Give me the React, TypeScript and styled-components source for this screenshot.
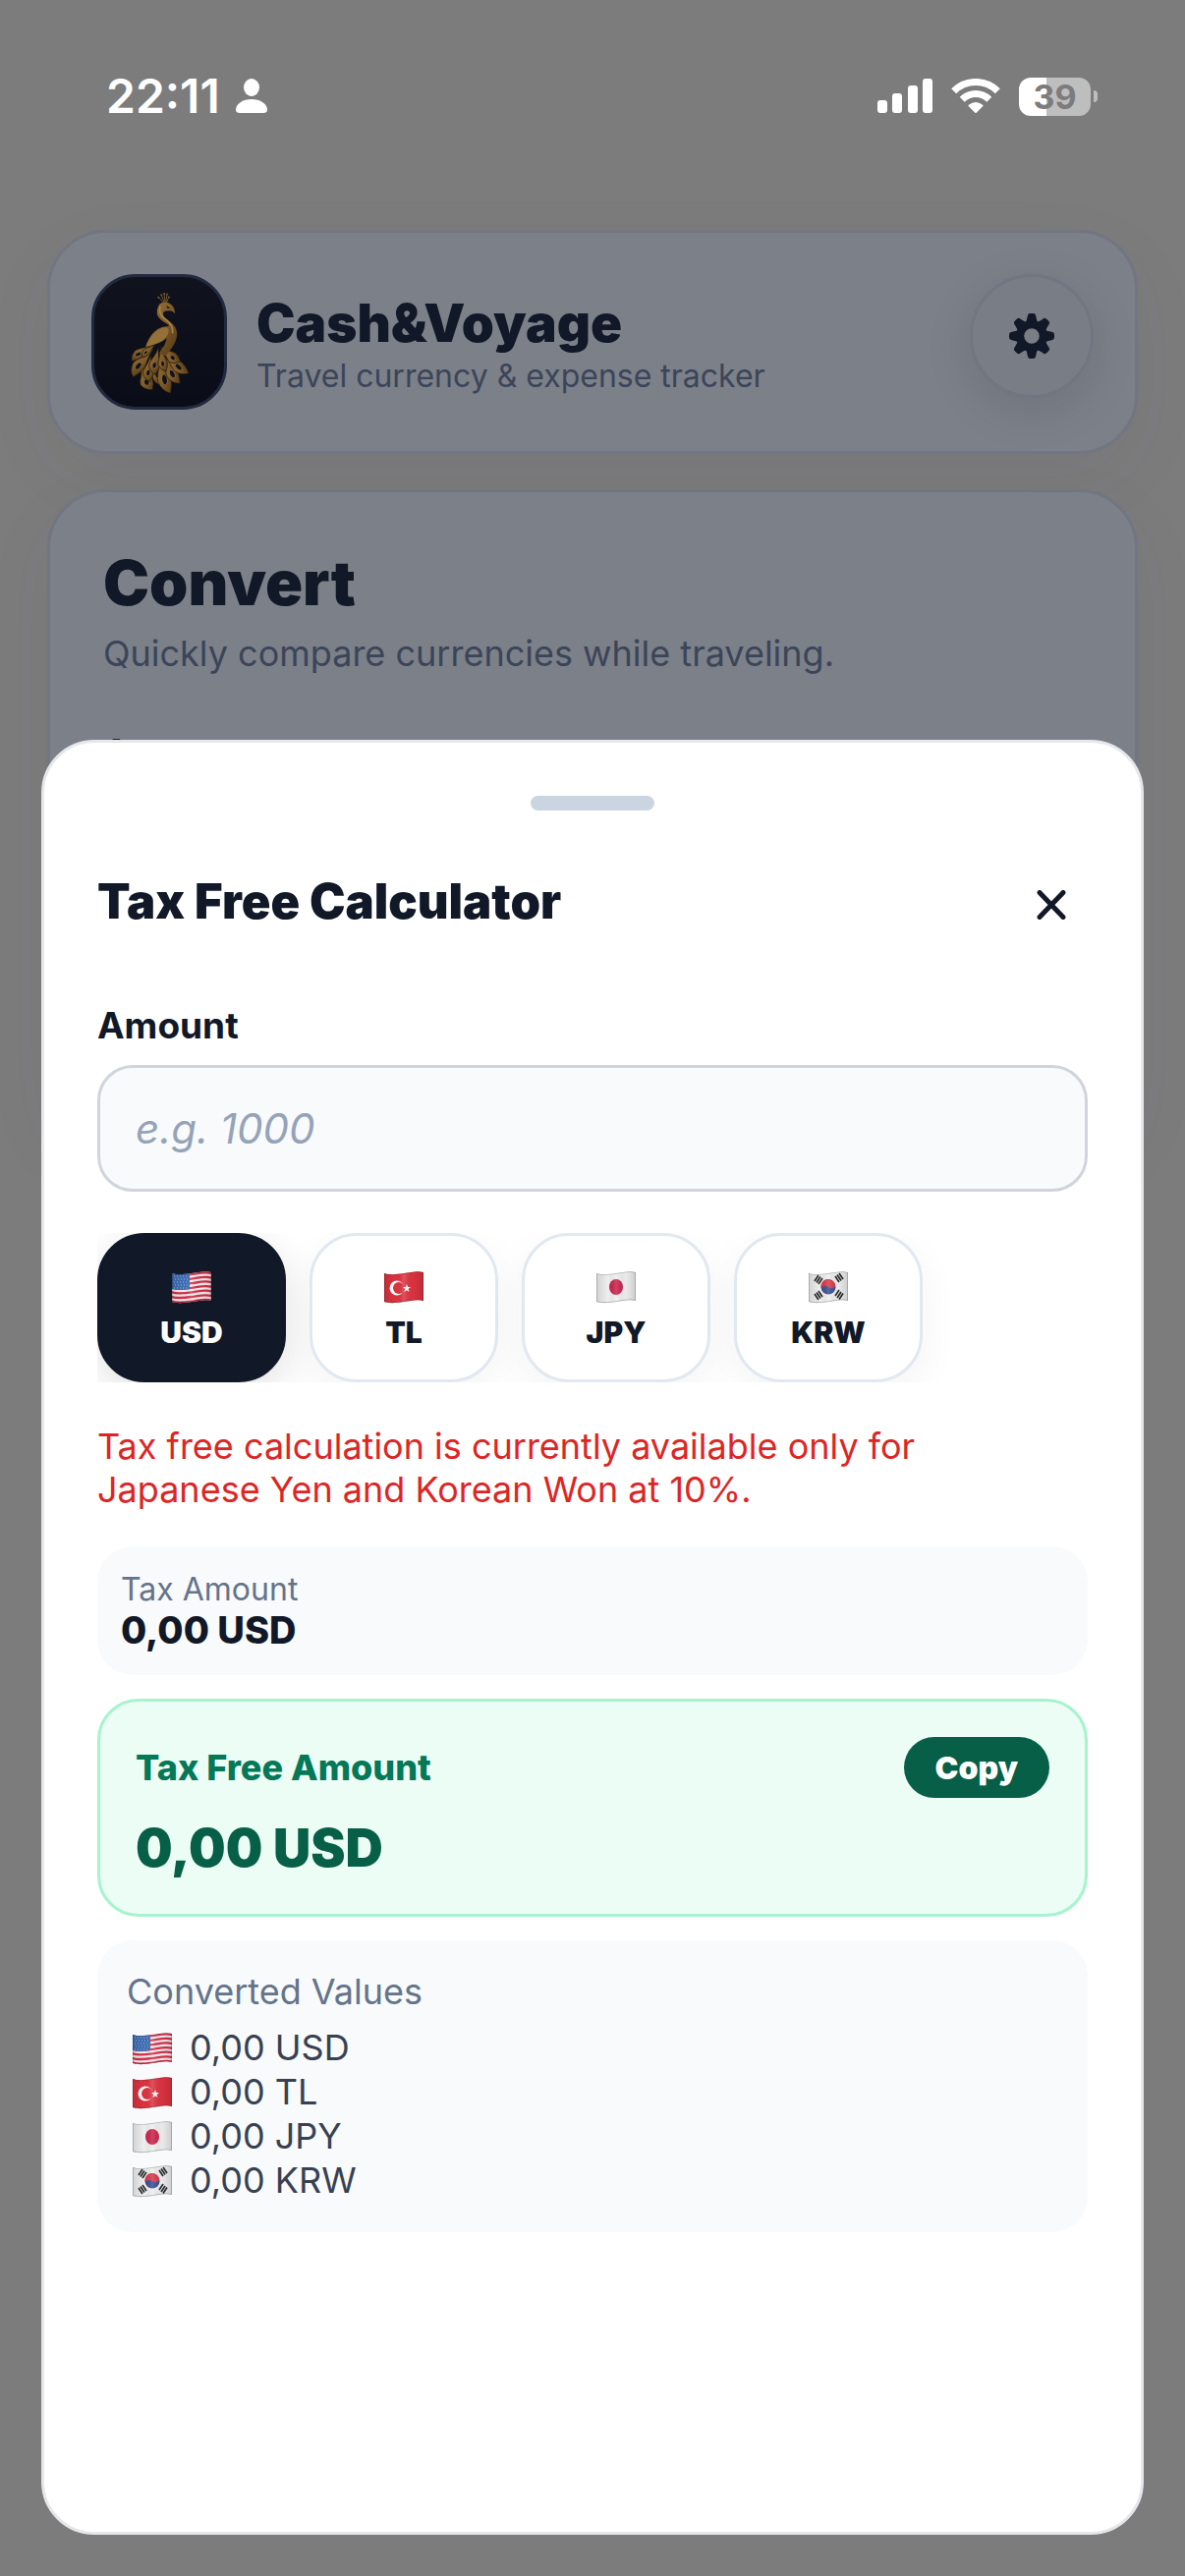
import { ReactNode, useId, useState } from "react";
import styled, { createGlobalStyle } from "styled-components"

type Currency = "USD" | "TL" | "JPY" | "KRW"

const currencies: Currency[] = ["USD", "TL", "JPY", "KRW"]

const currencyNames = {
    USD: "US Dollar",
    TL: "Turkish Lira",
    JPY: "Japanese Yen",
    KRW: "Korean Won"
}

function formatMoney(value: number){
    return value.toFixed(2).replace(".", ",")
}

function App(){

    const [amount, setAmount] = useState("")
    const [currency, setCurrency] = useState<Currency>("USD")

    const taxFreeAvailable = currency === "JPY" || currency === "KRW"
    const typed = Number(amount.replace(",", ".")) || 0
    const tax = taxFreeAvailable ? typed * 0.1 : 0
    const total = taxFreeAvailable ? typed - tax : 0

    return(
        <>
        <GlobalStyle/>
        <Screen>
            <StatusBar>
                <Clock>
                    22:11
                    <PersonIcon/>
                </Clock>
                <Indicators>
                    <SignalIcon/>
                    <WifiIcon/>
                    <Battery>
                        <span>39</span>
                        <BatteryTip/>
                    </Battery>
                </Indicators>
            </StatusBar>

            <HeaderCard>
                <Logo><Peacock/></Logo>
                <Brand>
                    <h1>Cash&amp;Voyage</h1>
                    <p>Travel currency &amp; expense tracker</p>
                </Brand>
                <SettingsButton aria-label="Settings"><GearIcon/></SettingsButton>
            </HeaderCard>

            <ConvertCard>
                <h2>Convert</h2>
                <p>Quickly compare currencies while traveling.</p>
                <strong>Amount</strong>
            </ConvertCard>
        </Screen>

        <Overlay>
            <Sheet role="dialog" aria-labelledby="sheet-title">
                <Handle/>
                <SheetHeader>
                    <h2 id="sheet-title">Tax Free Calculator</h2>
                    <CloseButton aria-label="Close"><CloseIcon/></CloseButton>
                </SheetHeader>

                <Label htmlFor="amount">Amount</Label>
                <AmountInput
                    id="amount"
                    value={amount}
                    onChange={(e) => setAmount(e.target.value)}
                    type="text"
                    inputMode="decimal"
                    placeholder="e.g. 1000"
                />

                <Chips>
                    {currencies.map((code) =>
                        <Chip
                            key={code}
                            type="button"
                            $active={code === currency}
                            aria-pressed={code === currency}
                            onClick={() => setCurrency(code)}
                        >
                            <Flag code={code}/>
                            {code}
                        </Chip>
                    )}
                </Chips>

                {!taxFreeAvailable &&
                    <Warning>Tax free calculation is currently available only for Japanese Yen and Korean Won at 10%.</Warning>
                }

                <TaxBox>
                    <p>Tax Amount</p>
                    <strong>{formatMoney(tax)} {currency}</strong>
                </TaxBox>

                <TotalBox>
                    <TotalHeader>
                        <h3>Tax Free Amount</h3>
                        <CopyButton type="button" onClick={() => navigator.clipboard?.writeText(formatMoney(total))}>Copy</CopyButton>
                    </TotalHeader>
                    <strong>{formatMoney(total)} {currency}</strong>
                </TotalBox>

                <ConvertedBox>
                    <h3>Converted Values</h3>
                    <ul>
                        {currencies.map((code) =>
                            <li key={code}>
                                <Flag code={code}/>
                                {formatMoney(0)} {code}
                            </li>
                        )}
                    </ul>
                </ConvertedBox>
            </Sheet>
        </Overlay>
        </>
    )
}

export default App

function PersonIcon(){
    return(
        <svg width="32" height="36" viewBox="0 0 32 36" fill="#fff" aria-hidden="true">
            <ellipse cx="16" cy="9" rx="8" ry="9"/>
            <path d="M16 21C25 21 32 26 32 31.500Q32 35 28 35H4Q0 35 0 31.500C0 26 7 21 16 21Z"/>
        </svg>
    )
}

function SignalIcon(){
    return(
        <svg width="56" height="36" viewBox="0 0 56 36" fill="#fff" aria-hidden="true">
            <rect x="0" y="22" width="10" height="13" rx="3"/>
            <rect x="15" y="15" width="10" height="20" rx="3"/>
            <rect x="31" y="7" width="10" height="28" rx="3"/>
            <rect x="46" y="0" width="10" height="35" rx="3"/>
        </svg>
    )
}

function WifiIcon(){
    return(
        <svg width="50" height="36" viewBox="0 0 50 36" fill="none" stroke="#fff" strokeWidth="7" aria-hidden="true">
            <path d="M2.700 12.700A31.500 31.500 0 0 1 47.300 12.700"/>
            <path d="M11.200 21.200A19.500 19.500 0 0 1 38.800 21.200"/>
            <path d="M25 34L18.500 27.500Q25 22.500 31.500 27.500Z" fill="#fff" stroke="#fff" strokeWidth="2" strokeLinejoin="round"/>
        </svg>
    )
}

function GearIcon(){
    return(
        <svg width="46" height="46" viewBox="-23 -23 46 46" aria-hidden="true">
            {[0, 45, 90, 135, 180, 225, 270, 315].map((angle) =>
                <path
                    key={angle}
                    transform={`rotate(${angle})`}
                    d="M-7 -13Q-5 -15 -4.500 -19L-4 -21Q-3.600 -22.800 -2 -22.900Q0 -23.100 2 -22.900Q3.600 -22.800 4 -21L4.500 -19Q5 -15 7 -13Z"
                    fill="#111827"
                />
            )}
            <circle r="11.800" fill="none" stroke="#111827" strokeWidth="8"/>
        </svg>
    )
}

function CloseIcon(){
    return(
        <svg width="30" height="30" viewBox="0 0 30 30" stroke="#111827" strokeWidth="5" strokeLinecap="round" aria-hidden="true">
            <path d="M3 2.500L27 27.500M27 2.500L3 27.500"/>
        </svg>
    )
}

// x, y of the root, angle, length, width
const feathers = [
    [205, 240, 3, 105, 36],
    [208, 235, -10, 140, 44],
    [150, 280, -17, 87, 42],
    [215, 240, -26, 115, 38],
    [215, 235, -46, 112, 36],
    [190, 225, 40, 115, 38],
    [180, 250, 8, 84, 34],
    [212, 222, -47, 78, 34],
    [190, 215, 58, 88, 30],
    [205, 225, 13, 87, 34],
    [212, 225, -7, 78, 30],
    [195, 215, 50, 60, 22]
]

function Peacock(){
    return(
        <svg viewBox="0 0 414 414" aria-hidden="true">
            <defs>
                <linearGradient id="gold" x1="0" y1="0" x2="1" y2="1">
                    <stop offset="0" stopColor="#9a7338"/>
                    <stop offset="0.500" stopColor="#7f5b29"/>
                    <stop offset="1" stopColor="#523716"/>
                </linearGradient>
            </defs>
            <g stroke="#755a30" strokeWidth="3" fill="#755a30">
                <path d="M222 82L206 66M224 80L214 58M226 80L223 54M228 80L232 56M230 82L238 64" fill="none"/>
                <circle cx="205" cy="65" r="2"/>
                <circle cx="214" cy="57" r="2"/>
                <circle cx="223" cy="53" r="2"/>
                <circle cx="232" cy="55" r="2"/>
                <circle cx="238" cy="64" r="2"/>
            </g>
            {feathers.map(([x, y, angle, length, width], i) =>
                <g key={i} transform={`translate(${x} ${y}) rotate(${angle})`}>
                    <path
                        d={`M0 0C${-width / 6} ${length * 0.4} ${-width / 2} ${length * 0.5} ${-width / 2} ${length * 0.7}Q${-width / 3} ${length * 0.92} ${width / 4} ${length}Q${width / 2} ${length * 0.8} ${width / 2} ${length * 0.66}C${width / 2} ${length * 0.5} ${width / 6} ${length * 0.4} 0 0Z`}
                        fill="url(#gold)"
                        stroke="#1f1710"
                        strokeWidth="2"
                    />
                    <ellipse cy={length * 0.67} rx={width / 5} ry={length * 0.12} fill="#11121a" stroke="#a27c42" strokeWidth="2"/>
                </g>
            )}
            <path d="M204 94C208 80 226 76 238 83C250 89 256 98 258 117C250 108 244 106 234 108C220 108 217 114 221 123C228 140 264 148 264 180C264 210 242 234 226 252L208 242C222 222 232 206 230 194C224 206 196 216 164 222C172 200 188 162 226 158C238 157 240 156 236 152C216 140 200 130 200 112Q200 102 204 94Z" fill="url(#gold)"/>
            <path d="M234 184C222 206 196 214 164 222C176 194 194 168 226 161C238 162 240 172 234 184Z" fill="#94703a"/>
            <path d="M210 94C206 110 211 124 226 134C244 146 252 158 250 180" fill="none" stroke="#a8834a" strokeWidth="5"/>
            <path d="M230 92L242 98L234 101Z" fill="#1a1518"/>
        </svg>
    )
}

const wave = "C12 8 19 7 26 6S40 3 46 5"

function Flag({ code }: { code: Currency }){

    const id = useId()
    const art: Record<Currency, ReactNode> = {
        USD:
            <>
                <rect x="6" y="2" width="40" height="36" fill="#f3eeee"/>
                <g fill="none" stroke="#d5304a" strokeWidth="2.300">
                    {[0, 1, 2, 3, 4, 5, 6].map((i) =>
                        <path key={i} transform={`translate(0 ${i * 4.6 + 1})`} d={`M6 6${wave}`}/>
                    )}
                </g>
                <path d="M6 4L24 5V22Q14 24 6 22Z" fill="#3f6fb5"/>
                <g stroke="#9fbbe0" strokeWidth="1" strokeDasharray="1 2">
                    <path d="M8 9H23M9 12H23M8 15H23M9 18H23M8 21H23"/>
                </g>
            </>,
        TL:
            <>
                <rect x="6" y="2" width="40" height="36" fill="#dc3340"/>
                <circle cx="19" cy="21" r="7.500" fill="#fff"/>
                <circle cx="21" cy="21" r="6" fill="#dc3340"/>
                <path d="M25 20L28 20L29 17L30 20L33 20L30.500 22L31.500 25L29 23.300L26.500 25L27.300 22Z" fill="#fff"/>
            </>,
        JPY:
            <>
                <rect x="6" y="2" width="40" height="36" fill="#efefef"/>
                <ellipse cx="26" cy="20" rx="7" ry="8" fill="#c9234a"/>
            </>,
        KRW:
            <>
                <rect x="6" y="2" width="40" height="36" fill="#efefef"/>
                <circle cx="26" cy="20" r="7.500" fill="#3b4f8f"/>
                <path d="M18.500 21A7.500 7.500 0 0 1 33.400 18C32 22 28 22 26 20S20 19 18.500 21Z" fill="#d63a4a"/>
                <g stroke="#2b2b2b" strokeWidth="1.700">
                    <path d="M12 14L16 8M14 15.500L18 9.500M16 17L20 11"/>
                    <path d="M33 9L37 15M35 7.500L39 13.500M37 6L41 12"/>
                    <path d="M12 27L16 33M14 25.500L18 31.500M16 24L20 30"/>
                    <path d="M33 29L37 23M35 31L39 25M37 32.500L41 26.500"/>
                </g>
            </>
    }

    return(
        <svg width="52" height="40" viewBox="0 0 52 40" role="img" aria-label={currencyNames[code]}>
            <defs>
                <clipPath id={`${id}-clip`}>
                    <path d={`M6 6${wave}V34C40 32 33 34 26 35S12 37 6 35Z`}/>
                </clipPath>
                <linearGradient id={`${id}-shade`}>
                    <stop offset="0" stopColor="#000" stopOpacity="0.120"/>
                    <stop offset="0.300" stopColor="#000" stopOpacity="0"/>
                    <stop offset="0.500" stopColor="#fff" stopOpacity="0.150"/>
                    <stop offset="0.750" stopColor="#000" stopOpacity="0.020"/>
                    <stop offset="1" stopColor="#000" stopOpacity="0.140"/>
                </linearGradient>
            </defs>
            <g clipPath={`url(#${id}-clip)`}>
                {art[code]}
                <rect x="6" y="2" width="40" height="36" fill={`url(#${id}-shade)`}/>
                <path d={`M6 6${wave}V34C40 32 33 34 26 35S12 37 6 35Z`} fill="none" stroke="#000" strokeOpacity="0.250" strokeWidth="1.500"/>
            </g>
        </svg>
    )
}

const GlobalStyle = createGlobalStyle`
    * {
        box-sizing: border-box;
        margin: 0;
        padding: 0;
    }

    body {
        background-color: #7c7c7d;
        color: #111827;
        font-family: Inter, "Liberation Sans", sans-serif;
    }

    button, input {
        font-family: inherit;
    }

    svg {
        display: block;
        flex-shrink: 0;
    }
`

const Screen = styled.main`
    height: 100vh;
    padding: 0 48px;
    overflow: hidden;
`

const StatusBar = styled.div`
    height: 234px;
    padding: 66px 41px 0 60px;
    display: flex;
    align-items: flex-start;
    justify-content: space-between;
    color: #fff;
`

const Clock = styled.div`
    display: flex;
    align-items: center;
    gap: 16px;
    font-size: 48px;
    line-height: 64px;
    font-weight: 600;
`

const Indicators = styled.div`
    height: 64px;
    display: flex;
    align-items: center;
    gap: 19px;
`

const Battery = styled.div`
    display: flex;
    align-items: center;
    gap: 3px;

    span {
        width: 73px;
        height: 39px;
        border-radius: 12px;
        background: linear-gradient(90deg, #fff 38%, #bebebe 38%);
        color: #7c7c7d;
        font-size: 34px;
        line-height: 39px;
        font-weight: 700;
        text-align: center;
    }
`

const BatteryTip = styled.i`
    width: 4px;
    height: 12px;
    border-radius: 0 4px 4px 0;
    background-color: #bebebe;
`

const Card = styled.section`
    border: 3px solid #727682;
    border-radius: 60px;
    background-color: #7c8088;
    box-shadow: 0 24px 72px rgba(60, 50, 60, 0.06);
`

const HeaderCard = styled(Card)`
    padding: 42px;
    display: flex;
    align-items: flex-start;
`

const Logo = styled.div`
    width: 138px;
    height: 138px;
    border: 3px solid #212a3f;
    border-radius: 45px;
    background: linear-gradient(#10131d, #0a0d17);
    overflow: hidden;
`

const Brand = styled.div`
    flex: 1;
    align-self: center;
    margin-left: 30px;
    padding-top: 4px;

    h1 {
        font-size: 53px;
        line-height: 62px;
        font-weight: 900;
    }

    p {
        margin-top: 4px;
        font-size: 32px;
        line-height: 38px;
        color: #3b4559;
    }
`

const SettingsButton = styled.button`
    width: 126px;
    height: 126px;
    display: flex;
    align-items: center;
    justify-content: center;
    border: 3px solid #727682;
    border-radius: 50%;
    background-color: #797d85;
    box-shadow: 0 12px 48px rgba(17, 24, 39, 0.12);
`

const ConvertCard = styled(Card)`
    height: 660px;
    margin-top: 36px;
    padding: 54px;

    h2 {
        font-size: 63px;
        line-height: 76px;
        font-weight: 900;
    }

    p {
        margin-top: 12px;
        font-size: 36px;
        line-height: 44px;
        color: #3b4559;
    }

    strong {
        display: block;
        margin-top: 56px;
        font-size: 36px;
        line-height: 44px;
    }
`

const Overlay = styled.div`
    position: fixed;
    inset: 0;
    padding: 42px;
    display: flex;
    flex-direction: column;
    justify-content: flex-end;
`

const Sheet = styled.section`
    padding: 54px 54px 305px;
    display: flex;
    flex-direction: column;
    border: 3px solid #e5e7eb;
    border-radius: 54px;
    background-color: #fff;
`

const Handle = styled.div`
    width: 126px;
    height: 15px;
    align-self: center;
    border-radius: 8px;
    background-color: #cbd5e1;
`

const SheetHeader = styled.header`
    margin: 60px 0 65px;
    display: flex;
    align-items: flex-start;
    justify-content: space-between;

    h2 {
        font-size: 49px;
        line-height: 66px;
        font-weight: 900;
    }
`

const CloseButton = styled.button`
    width: 74px;
    height: 72px;
    display: flex;
    align-items: center;
    justify-content: center;
    border: none;
    background: none;
`

const Label = styled.label`
    margin-bottom: 18px;
    font-size: 37px;
    line-height: 44px;
    font-weight: 700;
`

const AmountInput = styled.input`
    width: 100%;
    height: 129px;
    padding: 0 36px;
    border: 3px solid #d1d5db;
    border-radius: 36px;
    background-color: #f8fafc;
    color: #111827;
    font-size: 42px;
    outline: none;

    &::placeholder {
        color: #94a3b8;
        font-style: italic;
        opacity: 1;
    }
`

const Chips = styled.div`
    margin: 42px 0 43px;
    display: flex;
    gap: 24px;
    overflow: hidden;
`

const Chip = styled.button<{ $active: boolean }>`
    width: 192px;
    height: 152px;
    padding-top: 2px;
    display: flex;
    flex-direction: column;
    align-items: center;
    justify-content: center;
    gap: 8px;
    border: 3px solid ${(p) => p.$active ? "#111827" : "#e2e8f0"};
    border-radius: 48px;
    background-color: ${(p) => p.$active ? "#111827" : "#fff"};
    box-shadow: 0 12px 42px rgba(0, 0, 0, ${(p) => p.$active ? 0.12 : 0.05});
    color: ${(p) => p.$active ? "#fff" : "#111827"};
    font-size: 30px;
    line-height: 36px;
    font-weight: 900;
`

const Warning = styled.p`
    max-width: 900px;
    margin-bottom: 36px;
    color: #dc2626;
    font-size: 36px;
    line-height: 44px;
`

const TaxBox = styled.div`
    padding: 24px;
    border-radius: 36px;
    background-color: #f8fafc;

    p {
        color: #64748b;
        font-size: 32px;
        line-height: 40px;
    }

    strong {
        display: block;
        font-size: 38px;
        line-height: 43px;
        font-weight: 800;
    }
`

const TotalBox = styled.div`
    margin: 24px 0;
    padding: 36px;
    border: 3px solid #a7f3d0;
    border-radius: 42px;
    background-color: #ecfdf5;

    strong {
        display: block;
        margin-top: 20px;
        color: #065f46;
        font-size: 53px;
        line-height: 62px;
        font-weight: 900;
    }
`

const TotalHeader = styled.div`
    display: flex;
    align-items: center;
    justify-content: space-between;

    h3 {
        color: #047857;
        font-size: 36px;
        line-height: 44px;
        font-weight: 800;
    }
`

const CopyButton = styled.button`
    height: 62px;
    padding: 0 32px;
    border: none;
    border-radius: 31px;
    background-color: #065f46;
    color: #fff;
    font-size: 32px;
    font-weight: 900;
`

const ConvertedBox = styled.div`
    padding: 30px;
    border-radius: 36px;
    background-color: #f8fafc;

    h3 {
        margin-bottom: 12px;
        color: #64748b;
        font-size: 36px;
        line-height: 45px;
        font-weight: 400;
    }

    ul {
        list-style: none;
    }

    li {
        display: flex;
        align-items: center;
        gap: 12px;
        color: #374151;
        font-size: 36px;
        line-height: 45px;
    }
`
